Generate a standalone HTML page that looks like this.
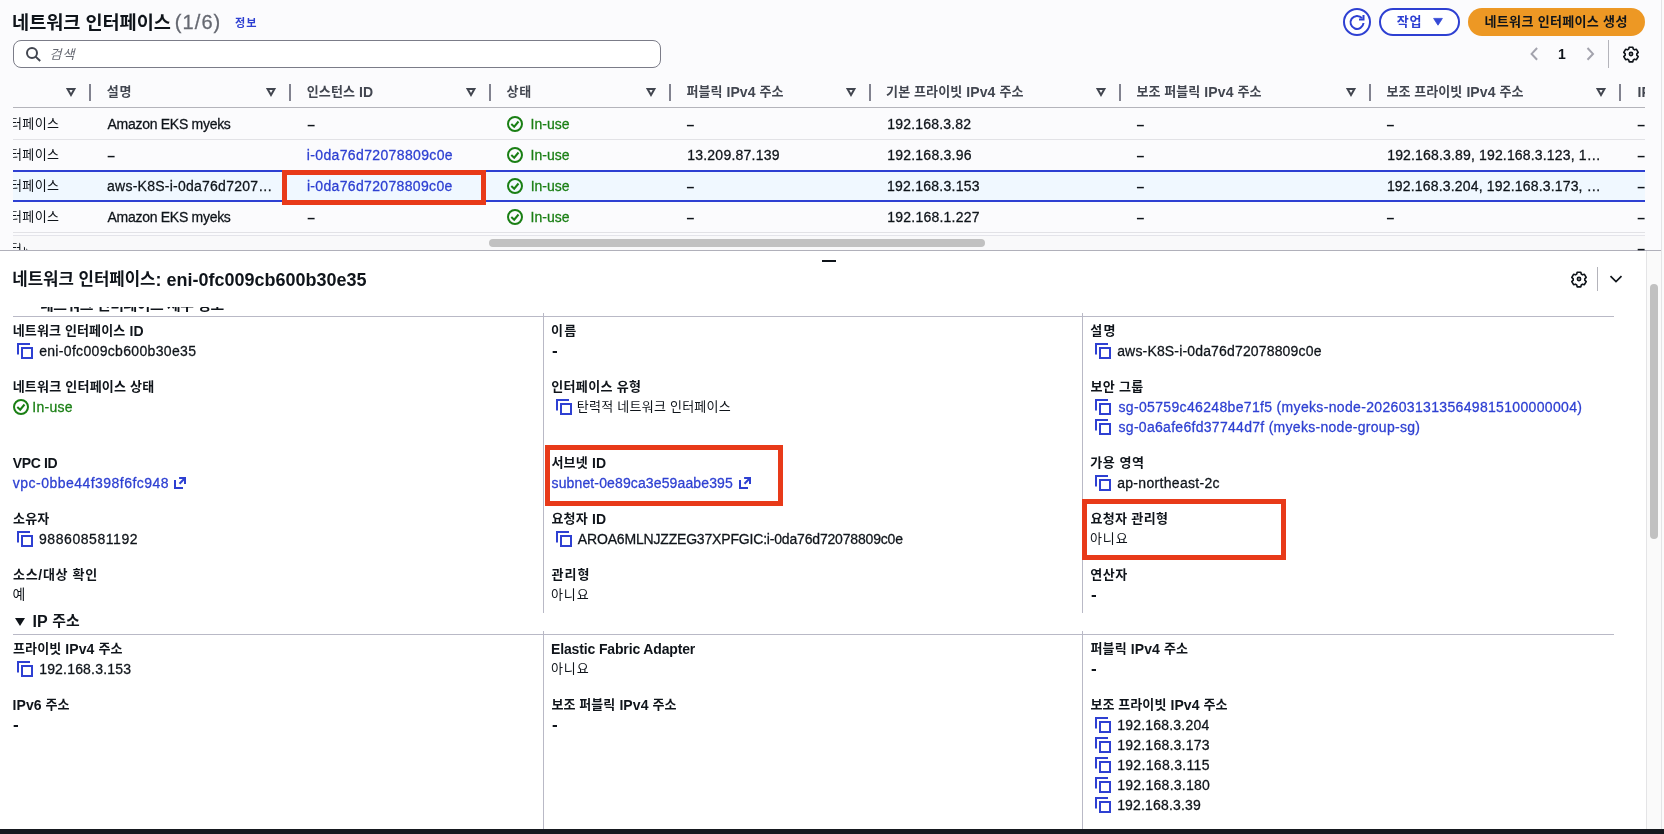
<!DOCTYPE html>
<html lang="ko"><head><meta charset="utf-8"><title>네트워크 인터페이스</title>
<style>
html,body{margin:0;padding:0}
body{width:1664px;height:834px;overflow:hidden;position:relative;background:#fff;font-family:"Liberation Sans","Noto Sans CJK KR",sans-serif;will-change:transform}
.t{position:absolute;white-space:nowrap;font-family:"Liberation Sans","Noto Sans CJK KR",sans-serif}
.r{-webkit-text-stroke:.28px}
.k{font-size:.93em;position:relative;top:-.6px;-webkit-text-stroke:0}
.b{position:absolute}
.i{position:absolute;overflow:visible}
#top{position:absolute;left:0;top:0;width:1664px;height:250px;background:#fbfbfd}
#tbl{position:absolute;left:13px;top:70px;width:1632px;height:180px;overflow:hidden}
</style></head><body>
<div id="top"></div>
<!-- right gutter -->
<div class="b" style="left:1661px;top:0;width:1px;height:829px;background:#e4e4e6"></div>
<div class="b" style="left:1662px;top:0;width:2px;height:829px;background:#fbfbfb"></div>
<!-- search box -->
<div class="b" style="left:13px;top:40px;width:646px;height:26px;border:1px solid #7b7c88;border-radius:8px;background:#fff"></div>
<svg class="i" style="left:25px;top:46px" width="16" height="16" viewBox="0 0 16 16" fill="none" stroke="#424650" stroke-width="2"><circle cx="7" cy="7" r="5"/><path d="M10.6 10.6L15.2 15"/></svg>
<!-- buttons -->
<div class="b" style="left:1343px;top:8px;width:24px;height:24px;border:2px solid #2e40d2;border-radius:50%;background:#fff"></div>
<svg class="i" style="left:1349px;top:14px" width="16" height="16" viewBox="0 0 16 16" fill="none" stroke="#2e40d2" stroke-width="2"><path d="M14.5 9A6.5 6.5 0 1 1 13 4.2"/><path d="M14.5 1v4.5H10"/></svg>
<div class="b" style="left:1379px;top:8px;width:77px;height:24px;border:2px solid #2e40d2;border-radius:14px;background:#fff"></div>
<svg class="i" style="left:1433px;top:18.3px" width="10" height="8" viewBox="0 0 10 8"><path d="M.6 .4h8.8L5 7.2z" fill="#3549d6" stroke="#3549d6" stroke-width=".8" stroke-linejoin="round"/></svg>
<div class="b" style="left:1468px;top:8px;width:177px;height:28px;border-radius:14px;background:#ed9824"></div>
<!-- pagination -->
<svg class="i" style="left:1530px;top:47px" width="9" height="14" viewBox="0 0 9 14" fill="none" stroke="#a3a3ad" stroke-width="2"><path d="M7.1 1L1.6 6.9l5.5 5.9"/></svg>
<svg class="i" style="left:1586px;top:47px" width="9" height="14" viewBox="0 0 9 14" fill="none" stroke="#a3a3ad" stroke-width="2"><path d="M1.5 1L7 6.9 1.5 12.8"/></svg>
<div class="b" style="left:1607.5px;top:40px;width:1px;height:28px;background:#b4b4bb"></div>
<!-- table lines -->
<div class="b" style="left:13px;top:107px;width:1632px;height:1px;background:#b4b4bb"></div>
<div class="b" style="left:13px;top:139px;width:1632px;height:1px;background:#e2e2e6"></div>
<div class="b" style="left:13px;top:170px;width:1632px;height:32px;background:#f0f8ff;border-top:2px solid #2e40d2;border-bottom:2px solid #2e40d2;box-sizing:border-box"></div>
<div class="b" style="left:13px;top:232px;width:1632px;height:1px;background:#e2e2e6"></div>
<div class="b" style="left:13px;top:235px;width:1632px;height:1px;background:#e4e4ea"></div>
<div class="b" style="left:13px;top:236px;width:1632px;height:14px;background:#f9f9fa"></div>
<div class="b" style="left:489px;top:239px;width:496px;height:8px;border-radius:4px;background:#c1c1c1"></div>
<!-- last col clipped -->
<div class="b" style="left:1637px;top:80px;width:8px;height:170px;overflow:hidden">
 <span class="t" style="left:0.5px;top:1.5px;font-size:14px;line-height:20px;font-weight:700;color:#424650">IPv6 주소</span>
</div>
<!-- first column (scrolled, clipped at left edge) -->
<div class="b" style="left:13px;top:114px;width:60px;height:20px;overflow:hidden"><span class="t" style="left:-3px;top:0;font-size:14px;line-height:20px;color:#0f141a;letter-spacing:.4px"><span class="k">터페이스</span></span></div><div class="b" style="left:13px;top:145px;width:60px;height:20px;overflow:hidden"><span class="t" style="left:-3px;top:0;font-size:14px;line-height:20px;color:#0f141a;letter-spacing:.4px"><span class="k">터페이스</span></span></div><div class="b" style="left:13px;top:176px;width:60px;height:20px;overflow:hidden"><span class="t" style="left:-3px;top:0;font-size:14px;line-height:20px;color:#0f141a;letter-spacing:.4px"><span class="k">터페이스</span></span></div><div class="b" style="left:13px;top:207px;width:60px;height:20px;overflow:hidden"><span class="t" style="left:-3px;top:0;font-size:14px;line-height:20px;color:#0f141a;letter-spacing:.4px"><span class="k">터페이스</span></span></div>
<!-- row 5 partial -->
<div class="b" style="left:13px;top:240px;width:60px;height:10px;overflow:hidden;clip-path:polygon(0 0,3px 0,15px 10px,0 10px)"><span class="t" style="left:-3px;top:-1px;font-size:14px;line-height:20px;color:#0f141a;letter-spacing:.4px"><span class="k">터페이스</span></span></div>
<!-- panel divider -->
<div class="b" style="left:0;top:250px;width:1661px;height:1px;background:#b0b0ba"></div>
<div class="b" style="left:822px;top:260px;width:14px;height:2px;background:#0f141a"></div>
<!-- detail scrollbar -->
<div class="b" style="left:1646px;top:251px;width:15px;height:578px;background:#fafafa;border-left:1px solid #e4e4e6;box-sizing:border-box"></div>
<div class="b" style="left:1650px;top:284px;width:8px;height:255px;border-radius:4px;background:#c1c1c1"></div>
<!-- detail header icons -->
<div class="b" style="left:1597px;top:267px;width:1px;height:24px;background:#b4b4bb"></div>
<svg class="i" style="left:1609px;top:274px" width="14" height="10" viewBox="0 0 14 10" fill="none" stroke="#0f141a" stroke-width="1.7"><path d="M1.5 2.2l5.5 5.3 5.5-5.3"/></svg>
<!-- clipped section heading -->
<div class="b" style="left:13px;top:307px;width:300px;height:5px;overflow:hidden"><span class="t" style="left:27px;top:-11.3px;font-size:16px;line-height:20px;font-weight:700;color:#0f141a;letter-spacing:-0.4px"><span class="k">네트워크 인터페이스 세부 정보</span></span></div>
<!-- separators -->
<div class="b" style="left:13px;top:316px;width:1601px;height:1px;background:#b9b9c6"></div>
<div class="b" style="left:13px;top:634px;width:1601px;height:1px;background:#b9b9c6"></div>
<div class="b" style="left:543px;top:313px;width:1px;height:300px;background:#b9b9c6"></div>
<div class="b" style="left:1082px;top:313px;width:1px;height:300px;background:#b9b9c6"></div>
<div class="b" style="left:543px;top:631px;width:1px;height:198px;background:#b9b9c6"></div>
<div class="b" style="left:1082px;top:631px;width:1px;height:198px;background:#b9b9c6"></div>
<svg class="i" style="left:15px;top:618px" width="10" height="8" viewBox="0 0 10 8"><path d="M0 0h10L5 8z" fill="#0f141a"/></svg>
<svg class="i" style="left:66px;top:87.5px" width="10" height="9" viewBox="0 0 10 9" fill="none" stroke="#424650" stroke-width="2" stroke-linejoin="miter"><path d="M1.6 1h6.8L5 6.9z"/></svg>
<svg class="i" style="left:266px;top:87.5px" width="10" height="9" viewBox="0 0 10 9" fill="none" stroke="#424650" stroke-width="2" stroke-linejoin="miter"><path d="M1.6 1h6.8L5 6.9z"/></svg>
<svg class="i" style="left:466px;top:87.5px" width="10" height="9" viewBox="0 0 10 9" fill="none" stroke="#424650" stroke-width="2" stroke-linejoin="miter"><path d="M1.6 1h6.8L5 6.9z"/></svg>
<svg class="i" style="left:646px;top:87.5px" width="10" height="9" viewBox="0 0 10 9" fill="none" stroke="#424650" stroke-width="2" stroke-linejoin="miter"><path d="M1.6 1h6.8L5 6.9z"/></svg>
<svg class="i" style="left:846px;top:87.5px" width="10" height="9" viewBox="0 0 10 9" fill="none" stroke="#424650" stroke-width="2" stroke-linejoin="miter"><path d="M1.6 1h6.8L5 6.9z"/></svg>
<svg class="i" style="left:1096px;top:87.5px" width="10" height="9" viewBox="0 0 10 9" fill="none" stroke="#424650" stroke-width="2" stroke-linejoin="miter"><path d="M1.6 1h6.8L5 6.9z"/></svg>
<svg class="i" style="left:1346px;top:87.5px" width="10" height="9" viewBox="0 0 10 9" fill="none" stroke="#424650" stroke-width="2" stroke-linejoin="miter"><path d="M1.6 1h6.8L5 6.9z"/></svg>
<svg class="i" style="left:1596px;top:87.5px" width="10" height="9" viewBox="0 0 10 9" fill="none" stroke="#424650" stroke-width="2" stroke-linejoin="miter"><path d="M1.6 1h6.8L5 6.9z"/></svg>
<div class="b" style="left:89px;top:83.5px;width:2px;height:17px;background:#81828f"></div>
<div class="b" style="left:289px;top:83.5px;width:2px;height:17px;background:#81828f"></div>
<div class="b" style="left:489px;top:83.5px;width:2px;height:17px;background:#81828f"></div>
<div class="b" style="left:669px;top:83.5px;width:2px;height:17px;background:#81828f"></div>
<div class="b" style="left:869px;top:83.5px;width:2px;height:17px;background:#81828f"></div>
<div class="b" style="left:1119px;top:83.5px;width:2px;height:17px;background:#81828f"></div>
<div class="b" style="left:1369px;top:83.5px;width:2px;height:17px;background:#81828f"></div>
<div class="b" style="left:1619px;top:83.5px;width:2px;height:17px;background:#81828f"></div>
<svg class="i" style="left:507px;top:116px" width="16" height="16" viewBox="0 0 16 16" fill="none" stroke="#1a7f14" stroke-width="2"><circle cx="8" cy="8" r="7"/><path d="M4.3 8l2.9 2.7 4.3-5.2"/></svg>
<svg class="i" style="left:507px;top:147px" width="16" height="16" viewBox="0 0 16 16" fill="none" stroke="#1a7f14" stroke-width="2"><circle cx="8" cy="8" r="7"/><path d="M4.3 8l2.9 2.7 4.3-5.2"/></svg>
<svg class="i" style="left:507px;top:178px" width="16" height="16" viewBox="0 0 16 16" fill="none" stroke="#1a7f14" stroke-width="2"><circle cx="8" cy="8" r="7"/><path d="M4.3 8l2.9 2.7 4.3-5.2"/></svg>
<svg class="i" style="left:507px;top:209px" width="16" height="16" viewBox="0 0 16 16" fill="none" stroke="#1a7f14" stroke-width="2"><circle cx="8" cy="8" r="7"/><path d="M4.3 8l2.9 2.7 4.3-5.2"/></svg>
<svg class="i" style="left:17px;top:343px" width="16" height="16" viewBox="0 0 16 16" fill="none" stroke="#2e40d2" stroke-width="2"><path d="M1 11.5V1h12"/><rect x="5" y="5" width="10" height="10"/></svg>
<svg class="i" style="left:17px;top:531px" width="16" height="16" viewBox="0 0 16 16" fill="none" stroke="#2e40d2" stroke-width="2"><path d="M1 11.5V1h12"/><rect x="5" y="5" width="10" height="10"/></svg>
<svg class="i" style="left:17px;top:661px" width="16" height="16" viewBox="0 0 16 16" fill="none" stroke="#2e40d2" stroke-width="2"><path d="M1 11.5V1h12"/><rect x="5" y="5" width="10" height="10"/></svg>
<svg class="i" style="left:556px;top:399px" width="16" height="16" viewBox="0 0 16 16" fill="none" stroke="#2e40d2" stroke-width="2"><path d="M1 11.5V1h12"/><rect x="5" y="5" width="10" height="10"/></svg>
<svg class="i" style="left:556px;top:531px" width="16" height="16" viewBox="0 0 16 16" fill="none" stroke="#2e40d2" stroke-width="2"><path d="M1 11.5V1h12"/><rect x="5" y="5" width="10" height="10"/></svg>
<svg class="i" style="left:1095px;top:343px" width="16" height="16" viewBox="0 0 16 16" fill="none" stroke="#2e40d2" stroke-width="2"><path d="M1 11.5V1h12"/><rect x="5" y="5" width="10" height="10"/></svg>
<svg class="i" style="left:1095px;top:399px" width="16" height="16" viewBox="0 0 16 16" fill="none" stroke="#2e40d2" stroke-width="2"><path d="M1 11.5V1h12"/><rect x="5" y="5" width="10" height="10"/></svg>
<svg class="i" style="left:1095px;top:419px" width="16" height="16" viewBox="0 0 16 16" fill="none" stroke="#2e40d2" stroke-width="2"><path d="M1 11.5V1h12"/><rect x="5" y="5" width="10" height="10"/></svg>
<svg class="i" style="left:1095px;top:475px" width="16" height="16" viewBox="0 0 16 16" fill="none" stroke="#2e40d2" stroke-width="2"><path d="M1 11.5V1h12"/><rect x="5" y="5" width="10" height="10"/></svg>
<svg class="i" style="left:1095px;top:717px" width="16" height="16" viewBox="0 0 16 16" fill="none" stroke="#2e40d2" stroke-width="2"><path d="M1 11.5V1h12"/><rect x="5" y="5" width="10" height="10"/></svg>
<svg class="i" style="left:1095px;top:737px" width="16" height="16" viewBox="0 0 16 16" fill="none" stroke="#2e40d2" stroke-width="2"><path d="M1 11.5V1h12"/><rect x="5" y="5" width="10" height="10"/></svg>
<svg class="i" style="left:1095px;top:757px" width="16" height="16" viewBox="0 0 16 16" fill="none" stroke="#2e40d2" stroke-width="2"><path d="M1 11.5V1h12"/><rect x="5" y="5" width="10" height="10"/></svg>
<svg class="i" style="left:1095px;top:777px" width="16" height="16" viewBox="0 0 16 16" fill="none" stroke="#2e40d2" stroke-width="2"><path d="M1 11.5V1h12"/><rect x="5" y="5" width="10" height="10"/></svg>
<svg class="i" style="left:1095px;top:797px" width="16" height="16" viewBox="0 0 16 16" fill="none" stroke="#2e40d2" stroke-width="2"><path d="M1 11.5V1h12"/><rect x="5" y="5" width="10" height="10"/></svg>
<svg class="i" style="left:13px;top:399px" width="16" height="16" viewBox="0 0 16 16" fill="none" stroke="#1a7f14" stroke-width="2"><circle cx="8" cy="8" r="7"/><path d="M4.3 8l2.9 2.7 4.3-5.2"/></svg>
<svg class="i" style="left:174px;top:477px" width="12" height="12" viewBox="0 0 12 12" fill="none" stroke="#2e40d2" stroke-width="2"><path d="M1 3.1V11h8"/><path d="M5.1 1H11v5.9"/><path d="M11 1L5.5 6.7"/></svg>
<svg class="i" style="left:739px;top:477px" width="12" height="12" viewBox="0 0 12 12" fill="none" stroke="#2e40d2" stroke-width="2"><path d="M1 3.1V11h8"/><path d="M5.1 1H11v5.9"/><path d="M11 1L5.5 6.7"/></svg>
<svg class="i" style="left:1623px;top:46px" width="16" height="16" viewBox="0 0 16 16" fill="none" stroke="#0f141a" stroke-width="1.65" stroke-linejoin="round"><path d="M6.2 1.2h3.6l.5 1.9 1.2.7 1.9-.5 1.8 3.1-1.4 1.4v1.4l1.4 1.4-1.8 3.1-1.9-.5-1.2.7-.5 1.9H6.2l-.5-1.9-1.2-.7-1.9.5L.8 10.6l1.4-1.4V7.8L.8 6.4l1.8-3.1 1.9.5 1.2-.7z"/><circle cx="8" cy="8" r="1.6"/></svg>
<svg class="i" style="left:1571px;top:271px" width="16" height="16" viewBox="0 0 16 16" fill="none" stroke="#0f141a" stroke-width="1.65" stroke-linejoin="round"><path d="M6.2 1.2h3.6l.5 1.9 1.2.7 1.9-.5 1.8 3.1-1.4 1.4v1.4l1.4 1.4-1.8 3.1-1.9-.5-1.2.7-.5 1.9H6.2l-.5-1.9-1.2-.7-1.9.5L.8 10.6l1.4-1.4V7.8L.8 6.4l1.8-3.1 1.9.5 1.2-.7z"/><circle cx="8" cy="8" r="1.6"/></svg>
<span class="t" id="title" style="left:12.12px;top:10.50px;font-size:20px;line-height:24px;color:#0f141a;font-weight:700;letter-spacing:-0.047px;"><span class="k">네트워크 인터페이스</span></span>
<span class="t r" id="count" style="left:174.77px;top:10.00px;font-size:20px;line-height:24px;color:#656871;letter-spacing:1.099px;">(1/6)</span>
<span class="t" id="info" style="left:235.03px;top:16.00px;font-size:12px;line-height:16px;color:#2e40d2;font-weight:700;letter-spacing:0.880px;"><span class="k">정보</span></span>
<span class="t r" id="ph" style="left:49.49px;top:44.50px;font-size:14px;line-height:20px;color:#656871;letter-spacing:1.076px;font-style:italic;"><span class="k">검색</span></span>
<span class="t" id="act" style="left:1396.67px;top:11.50px;font-size:14px;line-height:20px;color:#2e40d2;font-weight:700;letter-spacing:0.854px;"><span class="k">작업</span></span>
<span class="t" id="create" style="left:1484.50px;top:11.50px;font-size:14px;line-height:20px;color:#0f141a;font-weight:700;letter-spacing:0.327px;"><span class="k">네트워크 인터페이스 생성</span></span>
<span class="t" id="pg1" style="left:1558.00px;top:44.00px;font-size:14px;line-height:20px;color:#0f141a;font-weight:700;">1</span>
<span class="t" id="h2" style="left:106.82px;top:81.50px;font-size:14px;line-height:20px;color:#424650;font-weight:700;letter-spacing:0.596px;"><span class="k">설명</span></span>
<span class="t" id="h3" style="left:306.81px;top:81.50px;font-size:14px;line-height:20px;color:#424650;font-weight:700;letter-spacing:0.073px;"><span class="k">인스턴스</span> ID</span>
<span class="t" id="h4" style="left:506.53px;top:81.50px;font-size:14px;line-height:20px;color:#424650;font-weight:700;letter-spacing:0.726px;"><span class="k">상태</span></span>
<span class="t" id="h5" style="left:686.43px;top:81.50px;font-size:14px;line-height:20px;color:#424650;font-weight:700;letter-spacing:0.064px;"><span class="k">퍼블릭</span> IPv4 <span class="k">주소</span></span>
<span class="t" id="h6" style="left:886.12px;top:81.50px;font-size:14px;line-height:20px;color:#424650;font-weight:700;letter-spacing:0.101px;"><span class="k">기본 프라이빗</span> IPv4 <span class="k">주소</span></span>
<span class="t" id="h7" style="left:1136.38px;top:81.50px;font-size:14px;line-height:20px;color:#424650;font-weight:700;letter-spacing:0.087px;"><span class="k">보조 퍼블릭</span> IPv4 <span class="k">주소</span></span>
<span class="t" id="h8" style="left:1386.38px;top:81.50px;font-size:14px;line-height:20px;color:#424650;font-weight:700;letter-spacing:0.083px;"><span class="k">보조 프라이빗</span> IPv4 <span class="k">주소</span></span>
<span class="t r" id="r0st" style="left:530.62px;top:114.00px;font-size:14px;line-height:20px;color:#1a7f14;">In-use</span>
<span class="t r" id="r1st" style="left:530.62px;top:145.00px;font-size:14px;line-height:20px;color:#1a7f14;">In-use</span>
<span class="t r" id="r2st" style="left:530.69px;top:176.00px;font-size:14px;line-height:20px;color:#1a7f14;letter-spacing:-0.008px;">In-use</span>
<span class="t r" id="r3st" style="left:530.62px;top:207.00px;font-size:14px;line-height:20px;color:#1a7f14;">In-use</span>
<span class="t r" id="r0c2" style="left:107.54px;top:114.00px;font-size:14px;line-height:20px;color:#0f141a;letter-spacing:-0.285px;">Amazon EKS myeks</span>
<span class="t r" id="r3c2" style="left:107.54px;top:207.00px;font-size:14px;line-height:20px;color:#0f141a;letter-spacing:-0.285px;">Amazon EKS myeks</span>
<span class="t r" id="r2c2" style="left:107.02px;top:176.00px;font-size:14px;line-height:20px;color:#0f141a;letter-spacing:0.247px;">aws-K8S-i-0da76d7207…</span>
<span class="t r" id="r1c3" style="left:306.74px;top:145.00px;font-size:14px;line-height:20px;color:#2e40d2;letter-spacing:0.364px;">i-0da76d72078809c0e</span>
<span class="t r" id="r2c3" style="left:306.88px;top:176.00px;font-size:14px;line-height:20px;color:#2e40d2;letter-spacing:0.341px;">i-0da76d72078809c0e</span>
<span class="t r" id="r1c5" style="left:687.20px;top:145.00px;font-size:14px;line-height:20px;color:#0f141a;letter-spacing:0.231px;">13.209.87.139</span>
<span class="t r" id="r0c6" style="left:887.20px;top:114.00px;font-size:14px;line-height:20px;color:#0f141a;letter-spacing:0.197px;">192.168.3.82</span>
<span class="t r" id="r1c6" style="left:887.20px;top:145.00px;font-size:14px;line-height:20px;color:#0f141a;letter-spacing:0.228px;">192.168.3.96</span>
<span class="t r" id="r2c6" style="left:886.91px;top:176.00px;font-size:14px;line-height:20px;color:#0f141a;letter-spacing:0.262px;">192.168.3.153</span>
<span class="t r" id="r3c6" style="left:887.20px;top:207.00px;font-size:14px;line-height:20px;color:#0f141a;letter-spacing:0.237px;">192.168.1.227</span>
<span class="t r" id="r1c8" style="left:1387.20px;top:145.00px;font-size:14px;line-height:20px;color:#0f141a;letter-spacing:0.163px;">192.168.3.89, 192.168.3.123, 1…</span>
<span class="t r" id="r2c8" style="left:1386.91px;top:176.00px;font-size:14px;line-height:20px;color:#0f141a;letter-spacing:0.173px;">192.168.3.204, 192.168.3.173, …</span>
<span class="t" id="d0" style="left:307.14px;top:114.79px;font-size:14px;line-height:20px;color:#0f141a;font-weight:700;">–</span>
<span class="t" id="d1" style="left:686.51px;top:114.79px;font-size:14px;line-height:20px;color:#0f141a;font-weight:700;">–</span>
<span class="t" id="d2" style="left:1136.51px;top:114.79px;font-size:14px;line-height:20px;color:#0f141a;font-weight:700;">–</span>
<span class="t" id="d3" style="left:1386.51px;top:114.79px;font-size:14px;line-height:20px;color:#0f141a;font-weight:700;">–</span>
<span class="t" id="d4" style="left:107.14px;top:145.79px;font-size:14px;line-height:20px;color:#0f141a;font-weight:700;">–</span>
<span class="t" id="d5" style="left:1136.51px;top:145.79px;font-size:14px;line-height:20px;color:#0f141a;font-weight:700;">–</span>
<span class="t" id="d6" style="left:686.52px;top:176.78px;font-size:14px;line-height:20px;color:#0f141a;font-weight:700;">–</span>
<span class="t" id="d7" style="left:1136.52px;top:176.78px;font-size:14px;line-height:20px;color:#0f141a;font-weight:700;">–</span>
<span class="t" id="d8" style="left:307.14px;top:207.79px;font-size:14px;line-height:20px;color:#0f141a;font-weight:700;">–</span>
<span class="t" id="d9" style="left:686.51px;top:207.79px;font-size:14px;line-height:20px;color:#0f141a;font-weight:700;">–</span>
<span class="t" id="d10" style="left:1136.51px;top:207.79px;font-size:14px;line-height:20px;color:#0f141a;font-weight:700;">–</span>
<span class="t" id="d11" style="left:1386.51px;top:207.79px;font-size:14px;line-height:20px;color:#0f141a;font-weight:700;">–</span>
<span class="t" id="d12" style="left:1637.14px;top:114.79px;font-size:14px;line-height:20px;color:#0f141a;font-weight:700;">–</span>
<span class="t" id="d13" style="left:1637.14px;top:145.79px;font-size:14px;line-height:20px;color:#0f141a;font-weight:700;">–</span>
<span class="t" id="d14" style="left:1637.18px;top:176.50px;font-size:14px;line-height:20px;color:#0f141a;font-weight:700;">–</span>
<span class="t" id="d15" style="left:1637.14px;top:207.79px;font-size:14px;line-height:20px;color:#0f141a;font-weight:700;">–</span>
<span class="t" id="d16" style="left:1637.14px;top:238.79px;font-size:14px;line-height:20px;color:#0f141a;font-weight:700;">–</span>
<span class="t" id="dtitle" style="left:12.29px;top:269.00px;font-size:18px;line-height:22px;color:#0f141a;font-weight:700;letter-spacing:-0.005px;"><span class="k">네트워크 인터페이스</span>: eni-0fc009cb600b30e35</span>
<span class="t" id="l11" style="left:12.68px;top:321.00px;font-size:14px;line-height:20px;color:#0f141a;font-weight:700;letter-spacing:0.140px;"><span class="k">네트워크 인터페이스</span> ID</span>
<span class="t r" id="v11" style="left:39.15px;top:341.00px;font-size:14px;line-height:20px;color:#0f141a;letter-spacing:0.327px;">eni-0fc009cb600b30e35</span>
<span class="t" id="l12" style="left:12.68px;top:377.00px;font-size:14px;line-height:20px;color:#0f141a;font-weight:700;letter-spacing:0.215px;"><span class="k">네트워크 인터페이스 상태</span></span>
<span class="t r" id="v12" style="left:32.24px;top:397.00px;font-size:14px;line-height:20px;color:#1a7f14;letter-spacing:0.291px;">In-use</span>
<span class="t" id="l13" style="left:12.72px;top:453.00px;font-size:14px;line-height:20px;color:#0f141a;font-weight:700;letter-spacing:-0.353px;">VPC ID</span>
<span class="t r" id="v13" style="left:12.82px;top:473.00px;font-size:14px;line-height:20px;color:#2e40d2;letter-spacing:0.469px;">vpc-0bbe44f398f6fc948</span>
<span class="t" id="l14" style="left:12.99px;top:509.00px;font-size:14px;line-height:20px;color:#0f141a;font-weight:700;letter-spacing:0.189px;"><span class="k">소유자</span></span>
<span class="t r" id="v14" style="left:39.03px;top:529.00px;font-size:14px;line-height:20px;color:#0f141a;letter-spacing:0.554px;">988608581192</span>
<span class="t" id="l15" style="left:12.99px;top:565.00px;font-size:14px;line-height:20px;color:#0f141a;font-weight:700;letter-spacing:0.682px;"><span class="k">소스</span>/<span class="k">대상 확인</span></span>
<span class="t r" id="v15" style="left:12.56px;top:585.00px;font-size:15px;line-height:20px;color:#0f141a;"><span class="k">예</span></span>
<span class="t" id="ipsec" style="left:32.50px;top:612.00px;font-size:16px;line-height:20px;color:#0f141a;font-weight:700;letter-spacing:0.134px;">IP <span class="k">주소</span></span>
<span class="t" id="l16" style="left:12.99px;top:639.00px;font-size:14px;line-height:20px;color:#0f141a;font-weight:700;letter-spacing:0.102px;"><span class="k">프라이빗</span> IPv4 <span class="k">주소</span></span>
<span class="t r" id="v16" style="left:39.17px;top:659.00px;font-size:14px;line-height:20px;color:#0f141a;letter-spacing:0.188px;">192.168.3.153</span>
<span class="t" id="l17" style="left:12.62px;top:695.00px;font-size:14px;line-height:20px;color:#0f141a;font-weight:700;letter-spacing:0.048px;">IPv6 <span class="k">주소</span></span>
<span class="t" id="v17" style="left:12.92px;top:714.69px;font-size:17px;line-height:20px;color:#0f141a;font-weight:700;">-</span>
<span class="t" id="l21" style="left:551.00px;top:321.00px;font-size:14px;line-height:20px;color:#0f141a;font-weight:700;letter-spacing:1.165px;"><span class="k">이름</span></span>
<span class="t" id="v21" style="left:551.92px;top:340.69px;font-size:17px;line-height:20px;color:#0f141a;font-weight:700;">-</span>
<span class="t" id="l22" style="left:551.25px;top:377.00px;font-size:14px;line-height:20px;color:#0f141a;font-weight:700;letter-spacing:0.319px;"><span class="k">인터페이스 유형</span></span>
<span class="t r" id="v22" style="left:576.86px;top:397.00px;font-size:14px;line-height:20px;color:#0f141a;letter-spacing:0.226px;"><span class="k">탄력적 네트워크 인터페이스</span></span>
<span class="t" id="l23" style="left:551.38px;top:453.00px;font-size:14px;line-height:20px;color:#0f141a;font-weight:700;letter-spacing:0.191px;"><span class="k">서브넷</span> ID</span>
<span class="t r" id="v23" style="left:551.54px;top:473.00px;font-size:14px;line-height:20px;color:#2e40d2;letter-spacing:0.129px;">subnet-0e89ca3e59aabe395</span>
<span class="t" id="l24" style="left:551.44px;top:509.00px;font-size:14px;line-height:20px;color:#0f141a;font-weight:700;letter-spacing:0.180px;"><span class="k">요청자</span> ID</span>
<span class="t r" id="v24" style="left:577.85px;top:529.00px;font-size:14px;line-height:20px;color:#0f141a;letter-spacing:-0.179px;">AROA6MLNJZZEG37XPFGIC:i-0da76d72078809c0e</span>
<span class="t" id="l25" style="left:551.47px;top:565.00px;font-size:14px;line-height:20px;color:#0f141a;font-weight:700;letter-spacing:1.007px;"><span class="k">관리형</span></span>
<span class="t r" id="v25" style="left:551.00px;top:585.00px;font-size:14px;line-height:20px;color:#0f141a;letter-spacing:0.899px;"><span class="k">아니요</span></span>
<span class="t" id="l26" style="left:551.00px;top:639.00px;font-size:14px;line-height:20px;color:#0f141a;font-weight:700;letter-spacing:-0.144px;">Elastic Fabric Adapter</span>
<span class="t r" id="v26" style="left:551.00px;top:659.00px;font-size:14px;line-height:20px;color:#0f141a;letter-spacing:0.899px;"><span class="k">아니요</span></span>
<span class="t" id="l27" style="left:551.44px;top:695.00px;font-size:14px;line-height:20px;color:#0f141a;font-weight:700;letter-spacing:0.080px;"><span class="k">보조 퍼블릭</span> IPv4 <span class="k">주소</span></span>
<span class="t" id="v27" style="left:551.92px;top:714.69px;font-size:17px;line-height:20px;color:#0f141a;font-weight:700;">-</span>
<span class="t" id="l31" style="left:1090.23px;top:321.00px;font-size:14px;line-height:20px;color:#0f141a;font-weight:700;letter-spacing:1.242px;"><span class="k">설명</span></span>
<span class="t r" id="v31" style="left:1117.18px;top:341.00px;font-size:14px;line-height:20px;color:#0f141a;letter-spacing:0.162px;">aws-K8S-i-0da76d72078809c0e</span>
<span class="t" id="l32" style="left:1090.44px;top:377.00px;font-size:14px;line-height:20px;color:#0f141a;font-weight:700;letter-spacing:0.292px;"><span class="k">보안 그룹</span></span>
<span class="t r" id="v32a" style="left:1118.54px;top:397.00px;font-size:14px;line-height:20px;color:#2e40d2;letter-spacing:0.335px;">sg-05759c46248be71f5 (myeks-node-20260313135649815100000004)</span>
<span class="t r" id="v32b" style="left:1118.54px;top:417.00px;font-size:14px;line-height:20px;color:#2e40d2;letter-spacing:0.291px;">sg-0a6afe6fd37744d7f (myeks-node-group-sg)</span>
<span class="t" id="l33" style="left:1090.35px;top:453.00px;font-size:14px;line-height:20px;color:#0f141a;font-weight:700;letter-spacing:0.516px;"><span class="k">가용 영역</span></span>
<span class="t r" id="v33" style="left:1117.18px;top:473.00px;font-size:14px;line-height:20px;color:#0f141a;letter-spacing:0.310px;">ap-northeast-2c</span>
<span class="t" id="l34" style="left:1090.44px;top:509.00px;font-size:14px;line-height:20px;color:#0f141a;font-weight:700;letter-spacing:0.337px;"><span class="k">요청자 관리형</span></span>
<span class="t r" id="v34" style="left:1090.00px;top:529.00px;font-size:14px;line-height:20px;color:#0f141a;letter-spacing:0.899px;"><span class="k">아니요</span></span>
<span class="t" id="l35" style="left:1090.25px;top:565.00px;font-size:14px;line-height:20px;color:#0f141a;font-weight:700;letter-spacing:0.558px;"><span class="k">연산자</span></span>
<span class="t" id="v35" style="left:1090.92px;top:584.69px;font-size:17px;line-height:20px;color:#0f141a;font-weight:700;">-</span>
<span class="t" id="l36" style="left:1090.56px;top:639.00px;font-size:14px;line-height:20px;color:#0f141a;font-weight:700;letter-spacing:0.090px;"><span class="k">퍼블릭</span> IPv4 <span class="k">주소</span></span>
<span class="t" id="v36" style="left:1090.92px;top:658.69px;font-size:17px;line-height:20px;color:#0f141a;font-weight:700;">-</span>
<span class="t" id="l37" style="left:1090.44px;top:695.00px;font-size:14px;line-height:20px;color:#0f141a;font-weight:700;letter-spacing:0.079px;"><span class="k">보조 프라이빗</span> IPv4 <span class="k">주소</span></span>
<span class="t r" id="ip0" style="left:1117.17px;top:715.00px;font-size:14px;line-height:20px;color:#0f141a;letter-spacing:0.214px;">192.168.3.204</span>
<span class="t r" id="ip1" style="left:1117.17px;top:735.00px;font-size:14px;line-height:20px;color:#0f141a;letter-spacing:0.239px;">192.168.3.173</span>
<span class="t r" id="ip2" style="left:1117.17px;top:755.00px;font-size:14px;line-height:20px;color:#0f141a;letter-spacing:0.319px;">192.168.3.115</span>
<span class="t r" id="ip3" style="left:1117.17px;top:775.00px;font-size:14px;line-height:20px;color:#0f141a;letter-spacing:0.267px;">192.168.3.180</span>
<span class="t r" id="ip4" style="left:1117.17px;top:795.00px;font-size:14px;line-height:20px;color:#0f141a;letter-spacing:0.177px;">192.168.3.39</span>
<!-- annotation boxes -->
<div class="b" style="left:282px;top:170px;width:194px;height:25px;border:5px solid #e83a19"></div>
<div class="b" style="left:545px;top:445px;width:228px;height:50.5px;border:5px solid #e83a19"></div>
<div class="b" style="left:1082px;top:499px;width:194px;height:51px;border:5px solid #e83a19"></div>
<!-- bottom bar -->
<div class="b" style="left:0;top:829px;width:1664px;height:5px;background:#16191f"></div>
</body></html>
